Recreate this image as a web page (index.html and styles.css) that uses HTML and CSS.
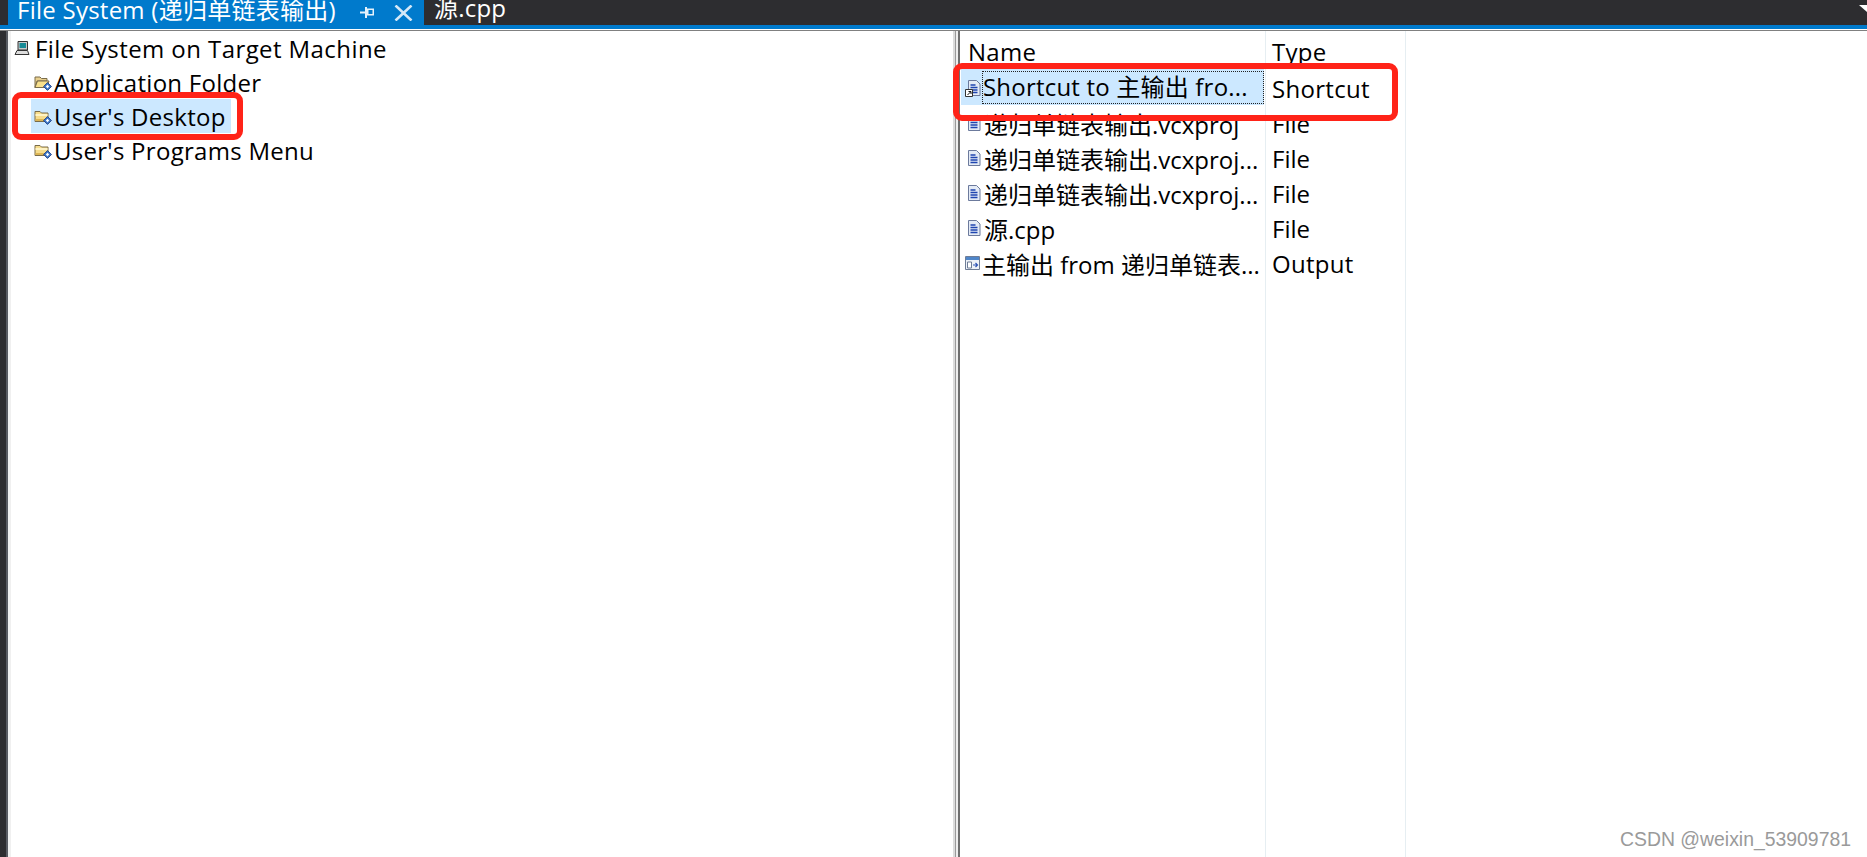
FILE: index.html
```html
<!DOCTYPE html>
<html lang="zh">
<head>
<meta charset="utf-8">
<title>File System</title>
<link rel="stylesheet" href="styles.css">
</head>
<body>
<svg class="defs" width="0" height="0" aria-hidden="true">
  <symbol id="gem" viewBox="0 0 8 8">
    <path d="M4 .5 7.500 4 4 7.500.5 4Z" fill="#3f78c8" stroke="#1d3f86" stroke-width=".8"/>
    <path d="M4 2.500 5.500 4 4 5.500 2.500 4Z" fill="#fff"/>
  </symbol>
  <symbol id="folder" viewBox="0 0 17 17">
    <path d="M1 3.500h5l1.500 1.500h6.500v8.500h-13Z" fill="#f6dc8c" stroke="#7a6c4a"/>
    <path d="M1.500 6h12v2h-12Z" fill="#fff3c4"/>
    <path d="M1.500 11h12v2h-12Z" fill="#dcb555"/>
  </symbol>
  <symbol id="folder-open" viewBox="0 0 17 17">
    <path d="M1 3h5l1.500 1.500h5.500v2.500h-10l-2 6.500Z" fill="#e8cf8e" stroke="#7a6c4a"/>
    <path d="M1 13.500 3.500 7h11.500l-2.500 6.500Z" fill="#f8e08c" stroke="#7a6c4a"/>
  </symbol>
  <symbol id="doc" viewBox="0 0 14 16">
    <path d="M1.500.5h8l3.500 3.500v11.500h-11.500Z" fill="#e4ebf6" stroke="#6c7a9c"/>
    <path d="M3.500 5h5M3.500 7.500h7M3.500 10h7M3.500 12.500h7" stroke="#1f45b0" stroke-width="1.300"/>
  </symbol>
</svg>

<header class="tabbar">
  <div class="tab-active">
    <span class="tab-title">File System (递归单链表输出)</span>
    <svg class="pin" viewBox="0 0 15 13"><path d="M0 5.500h5v2H0ZM5 1h2v11H5ZM7 2.500h7v7H7Zm1.500 1.500v4h4V4Z" fill="#e6f2fb"/></svg>
    <svg class="close" viewBox="0 0 19 16"><path d="M1.500 .5 17.500 15.500M17.500 .5 1.500 15.500" stroke="#d4e8f7" stroke-width="2.600"/></svg>
  </div>
  <div class="tab-other">源.cpp</div>
  <svg class="chevron" viewBox="0 0 8 7"><path d="M0 0h8v7Z" fill="#fff"/></svg>
</header>
<div class="accent"></div>

<main class="workspace">
  <section class="tree">
    <div class="tree-row tree-root">
      <svg class="icon-computer" viewBox="0 0 16 16">
        <path d="M4 1.500h9.500v8.500H4Z" fill="#c9c9c9" stroke="#333"/>
        <path d="M5.500 3h6.500v5H5.500Z" fill="#178a96"/>
        <path d="M1 14.500 3 10.500h10.500l1.500 4Z" fill="#ddd" stroke="#333"/>
      </svg>
      <span>File System on Target Machine</span>
    </div>
    <div class="tree-row tree-child">
      <span class="folder-wrap"><svg class="icon-folder"><use href="#folder-open"/></svg><svg class="icon-gem"><use href="#gem"/></svg></span>
      <span>Application Folder</span>
    </div>
    <div class="tree-row tree-child tree-selected">
      <span class="folder-wrap"><svg class="icon-folder"><use href="#folder"/></svg><svg class="icon-gem"><use href="#gem"/></svg></span>
      <span>User's Desktop</span>
    </div>
    <div class="tree-row tree-child">
      <span class="folder-wrap"><svg class="icon-folder"><use href="#folder"/></svg><svg class="icon-gem"><use href="#gem"/></svg></span>
      <span>User's Programs Menu</span>
    </div>
  </section>

  <div class="splitter"></div>

  <section class="list">
    <div class="list-head">
      <div class="col-name">Name</div>
      <div class="col-type latin">Type</div>
    </div>
    <div class="list-row list-selected">
      <div class="col-name cell-name">
        <span class="shortcut-wrap"><svg class="icon-doc"><use href="#doc"/></svg><svg class="icon-arrow" viewBox="0 0 8 8"><path d="M.5.500h7v7h-7Z" fill="#fff" stroke="#333"/><path d="M2.500 6 5.500 3M3.500 2.500h2.500v2.500" fill="none" stroke="#111"/></svg></span>
        <span class="focus-box">Shortcut to 主输出 fro...</span>
      </div>
      <div class="col-type latin">Shortcut</div>
    </div>
    <div class="list-row">
      <div class="col-name cell-name"><svg class="icon-doc"><use href="#doc"/></svg><span class="label">递归单链表输出.vcxproj</span></div>
      <div class="col-type">File</div>
    </div>
    <div class="list-row">
      <div class="col-name cell-name"><svg class="icon-doc"><use href="#doc"/></svg><span class="label">递归单链表输出.vcxproj...</span></div>
      <div class="col-type">File</div>
    </div>
    <div class="list-row">
      <div class="col-name cell-name"><svg class="icon-doc"><use href="#doc"/></svg><span class="label">递归单链表输出.vcxproj...</span></div>
      <div class="col-type">File</div>
    </div>
    <div class="list-row">
      <div class="col-name cell-name"><svg class="icon-doc"><use href="#doc"/></svg><span class="label">源.cpp</span></div>
      <div class="col-type">File</div>
    </div>
    <div class="list-row">
      <div class="col-name cell-name">
        <svg class="icon-output" viewBox="0 0 16 16">
          <path d="M.5 1.500h14v13H.5Z" fill="#eef2f8" stroke="#6f7d96"/>
          <path d="M1 2h13v3H1Z" fill="#4f86c9"/>
          <path d="M2.500 7h4v6h-4Z" fill="#fff" stroke="#6f7d96"/>
          <path d="M8 10h4M10.500 8l2 2-2 2" fill="none" stroke="#2f55b5" stroke-width="1.200"/>
        </svg>
        <span class="label">主输出 from 递归单链表...</span>
      </div>
      <div class="col-type latin">Output</div>
    </div>
  </section>
</main>

<div class="mark mark-tree"></div>
<div class="mark mark-list"></div>
<div class="watermark">CSDN @weixin_53909781</div>
</body>
</html>
```
FILE: styles.css
```css
* { box-sizing: border-box; }
html, body { height: 100%; }
body {
  margin: 0;
  position: relative;
  overflow: hidden;
  display: flex;
  flex-direction: column;
  background: #fff;
  color: #000;
  font-family: "Open Sans", "Noto Sans CJK SC", sans-serif;
  font-size: 24px;
}
.defs { position: absolute; }

.tabbar {
  height: 25px;
  flex: none;
  display: flex;
  background: #2d2d30;
  padding-left: 8px;
  position: relative;
  overflow: hidden;
  color: #fff;
}
.tab-active {
  width: 416px;
  background: #007acc;
  display: flex;
  align-items: center;
  padding-left: 9px;
}
.tab-title { width: 335px; flex: none; white-space: nowrap; line-height: 25px; margin-top: -7px; letter-spacing: .25px; }
.pin { width: 15px; height: 13px; margin-left: 8px; flex: none; }
.close { width: 19px; height: 16px; margin-left: 19px; flex: none; }
.tab-other { padding-left: 10px; line-height: 25px; margin-top: -5.5px; letter-spacing: .2px; }
.chevron { position: absolute; right: 0; top: 5px; width: 8px; height: 7px; }

.accent { height: 4px; flex: none; background: #007acc; }

.workspace {
  flex: 1;
  display: flex;
  min-height: 0;
  margin-top: 1px;
  border-top: 1px solid #808080;
  background:
    linear-gradient(90deg, #2d2d30 0 6px, #585b62 6px 8px) left / 8px 100% no-repeat,
    #fff;
  padding-left: 8px;
}

.tree {
  width: 945px;
  flex: none;
  border-left: 3px solid;
  border-image: linear-gradient(90deg, #f0f0f0 0 66%, #6f6f6f 66%) 3;
  padding: 0 0 0 3px;
  letter-spacing: .28px;
}
.tree-row { height: 34px; display: flex; align-items: center; white-space: nowrap; }
.tree-root { letter-spacing: .42px; }
.tree-root svg { width: 16px; height: 16px; margin-right: 5px; }
.tree-child { padding-left: 20px; width: fit-content; }
.tree-child > span:last-child { margin-left: 3px; }
.tree-selected { background: #cce8ff; padding-right: 5px; margin-left: 17px; padding-left: 3px; }
.folder-wrap { position: relative; display: block; width: 17px; height: 17px; flex: none; }
.icon-folder { width: 17px; height: 17px; display: block; }
.icon-gem { position: absolute; right: -1px; bottom: 0; width: 9px; height: 9px; }

.splitter {
  width: 8px;
  flex: none;
  background: linear-gradient(90deg, #dcdcdc 0 2px, #9a9a9a 2px 3px, #eee 3px 5px, #6f6f6f 5px 7px, #fff 7px);
}

.list {
  flex: 1;
  background:
    linear-gradient(#e6eef2, #e6eef2) 304px 0 / 1px 100% no-repeat,
    linear-gradient(#e6eef2, #e6eef2) 444px 0 / 1px 100% no-repeat;
}
.list-head, .list-row { display: flex; height: 35px; align-items: center; white-space: nowrap; }
.list-head { height: 39px; padding-top: 1px; letter-spacing: .3px; }
.col-name { width: 304px; flex: none; padding-left: 7px; }
.col-type { padding: 1px 0 0 7px; }
.list-head .col-type { padding-top: 0; }
.latin { letter-spacing: .3px; }
.cell-name { height: 100%; display: flex; align-items: center; padding: 1px 0 0 6px; }
.list-selected .cell-name {
  background: #cce8ff;
  padding: 2px 0 0 4px;
  width: 303px;
  height: 37px;
  margin: -2px 1px 0 0;
}
.shortcut-wrap { position: relative; width: 14px; height: 16px; flex: none; margin-right: 3px; }
.shortcut-wrap .icon-doc { position: absolute; left: 2px; top: 0; margin: 0; }
.icon-arrow { position: absolute; left: 0; bottom: -1px; width: 8px; height: 8px; }
.focus-box { flex: 1; height: 33px; line-height: 29px; border: 1px dotted #222; letter-spacing: .2px; }
.icon-doc { width: 14px; height: 16px; flex: none; margin-right: 3px; }
.icon-output { width: 16px; height: 16px; flex: none; margin: 0 1px 0 -2px; }
.label { display: block; }

.mark {
  position: absolute;
  border: 6px solid #ff2318;
  border-radius: 9px;
  pointer-events: none;
}
.mark-tree { left: 12px; top: 92px; width: 231px; height: 48px; }
.mark-list { left: 953px; top: 63px; width: 445px; height: 58px; }

.watermark {
  position: absolute;
  right: 16px;
  bottom: 6px;
  font-family: "Liberation Sans", sans-serif;
  font-size: 19.4px;
  color: #9a9a9a;
}
```
